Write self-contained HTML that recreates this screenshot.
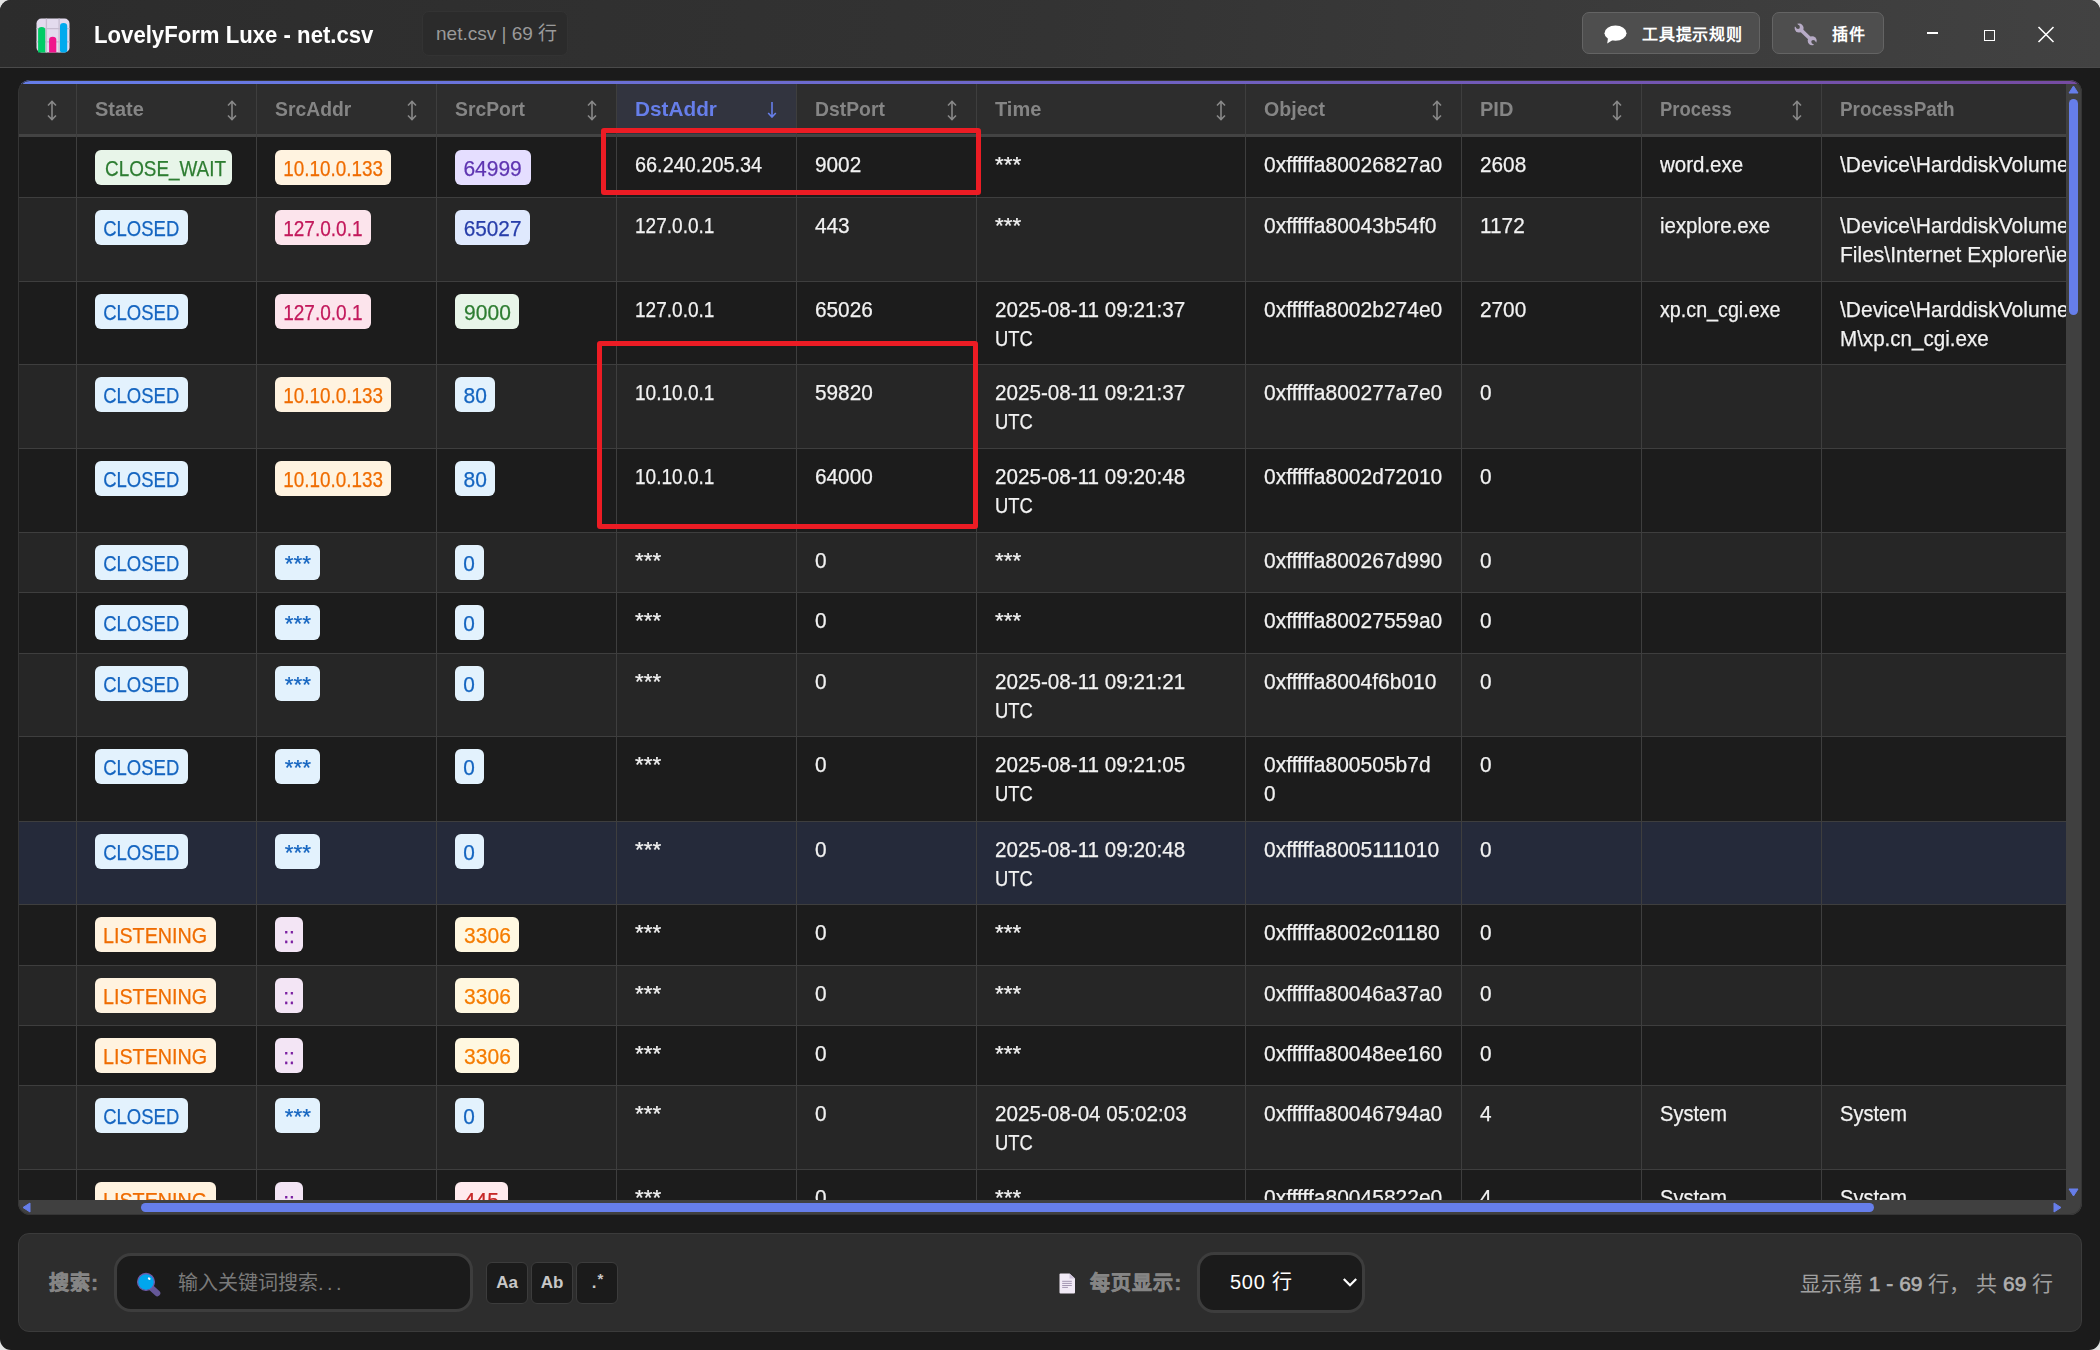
<!DOCTYPE html>
<html lang="zh-CN"><head><meta charset="utf-8">
<style>
*{box-sizing:border-box;margin:0;padding:0}
html,body{width:2100px;height:1350px;overflow:hidden;background:#e4e4e4;font-family:"Liberation Sans",sans-serif}
.win{position:absolute;left:0;top:0;width:2100px;height:1350px;border-radius:11px;background:#1b1b1b;overflow:hidden}
.tb{position:absolute;left:0;top:0;width:2100px;height:68px;background:linear-gradient(95deg,#2c2c2c 0%,#333 50%,#424242 100%);border-bottom:1px solid #4a4a4a}
.title{position:absolute;left:94px;top:21px;font-size:24px;transform:scaleX(0.923);transform-origin:left;font-weight:700;color:#fff;white-space:nowrap}
.fbadge{position:absolute;left:422px;top:11px;width:146px;height:45px;border-radius:7px;background:#2b2b2b;border:1px solid #333;color:#9a9a9a;font-size:19px;line-height:43px;padding-left:13px;white-space:nowrap}
.btn{position:absolute;top:12px;height:42px;border-radius:7px;background:#4e4e4e;border:1px solid #646464;color:#fff;font-size:17px;font-weight:700;white-space:nowrap}
.tbl{position:absolute;left:18px;top:80px;width:2064px;height:1135px;border-radius:12px;overflow:hidden;background:#1c1c1c}
.tblb{position:absolute;left:0;top:0;width:2064px;height:1135px;border-radius:12px;border:1px solid #353535}
.topbar{position:absolute;left:18px;top:80px;width:2064px;height:4px;background:linear-gradient(90deg,#667eea,#764ba2)}
.abs{position:absolute}
.hbg{position:absolute;left:18px;top:84px;width:2048px;height:50px;background:#2d2d2d}
.hbb{position:absolute;left:18px;top:134px;width:2048px;height:3px;background:#434343}
.hsel{position:absolute;top:84px;height:50px;background:#32343f}
.ht{position:absolute;top:94px;font-size:21px;font-weight:700;color:#858585;white-space:nowrap;line-height:29px}
.ht.sel{color:#667eea}
.arr{position:absolute;top:95px;width:16px;text-align:center;font-size:20px;color:#8a8a8a;line-height:29px}
.arr.sel{color:#667eea}
.row{position:absolute;left:18px;width:2048px}
.hl{position:absolute;left:18px;width:2048px;height:1px;background:#3e3e3e}
.vl{position:absolute;top:84px;width:1px;height:1116px;background:#3e3e3e}
.bd{position:absolute;height:35px;border-radius:6px;font-size:22px;-webkit-text-stroke:0.25px currentColor;line-height:34px;padding-top:2px;text-align:center;white-space:nowrap}
.ln{display:block;white-space:nowrap}
.bd .ln{display:inline-block}
.tx{position:absolute;font-size:22px;-webkit-text-stroke:0.25px currentColor;line-height:29px;color:#f2f2f2;white-space:nowrap;overflow:hidden}
.vsb{position:absolute;left:2066px;top:84px;width:16px;height:1132px;background:#404040}
.hsb{position:absolute;left:18px;top:1200px;width:2064px;height:15px;background:#404040}
.red{position:absolute;border:5px solid #ec1c24;border-radius:3px}
.btxt{position:absolute;top:22px;font-size:16px;letter-spacing:0.8px;font-weight:700;color:#fff;white-space:nowrap;line-height:26px}
.flab{position:absolute;top:1268px;font-size:20px;letter-spacing:1.1px;font-weight:700;-webkit-text-stroke:0.6px currentColor;color:#858585;white-space:nowrap;line-height:30px}
.finp{position:absolute;top:1253px;height:59px;border-radius:17px;background:#1b1b1b;border:3px solid #3d3d3d}
.fph{position:absolute;top:1268px;font-size:20px;color:#7a7a7a;white-space:nowrap;line-height:30px}
.fbtn{position:absolute;top:1262px;width:42px;height:42px;border-radius:6px;background:#1b1b1b;border:1px solid #3c3c3c;color:#c8c8c8;font-size:17px;font-weight:700;text-align:center;line-height:39px}
.fsel{position:absolute;top:1267px;font-size:20px;letter-spacing:0.7px;color:#fff;white-space:nowrap;line-height:30px}
.finfo{position:absolute;left:1800px;top:1269px;font-size:21px;color:#a0a0a0;white-space:nowrap;line-height:30px}
.finfo b{font-weight:400;-webkit-text-stroke:0.6px currentColor;color:#b0b0b0}
.foot{position:absolute;left:18px;top:1233px;width:2064px;height:99px;border-radius:11px;background:#2d2d2d;border:1px solid #3b3b3b}
</style></head><body>
<div class="win">
  <div class="tb">
    <svg class="abs" style="left:36px;top:18px" width="34" height="35" viewBox="-0.5 -0.5 34 35">
      <rect x="0" y="0" width="33" height="34" rx="5" fill="#e3dbee"/>
      <line x1="9.9" y1="0" x2="9.9" y2="34" stroke="#c6bcd0" stroke-width="1.3"/>
      <line x1="22.6" y1="0" x2="22.6" y2="34" stroke="#c6bcd0" stroke-width="1.3"/>
      <line x1="0" y1="10.2" x2="33" y2="10.2" stroke="#c6bcd0" stroke-width="1.3"/>
      <line x1="0" y1="23.4" x2="33" y2="23.4" stroke="#c6bcd0" stroke-width="1.3"/>
      <path d="M1.6 11.5 q0-3 3.6-3 q3.6 0 3.6 3 V34 H1.6z" fill="#00cc66"/>
      <path d="M12.6 21.2 q0-3 3.6-3 q3.6 0 3.6 3 V34 H12.6z" fill="#f0148c"/>
      <path d="M23.5 7.6 q0-3 3.6-3 q3.6 0 3.6 3 V32 q0 2-2 2 h-3.2 q-2 0-2-2z" fill="#00aaee"/>
    </svg>
    <div class="title">LovelyForm Luxe - net.csv</div>
    <div class="fbadge">net.csv | 69 行</div>
    <div class="btn" style="left:1582px;width:178px"></div>
    <svg class="abs" style="left:1603px;top:25px" width="25" height="20" viewBox="0 0 25 20">
      <ellipse cx="12.5" cy="8.2" rx="11" ry="7.6" fill="#fff"/>
      <path d="M5 13 L4.2 18.5 L10.5 14.5z" fill="#fff"/>
    </svg>
    <div class="btxt" style="left:1642px">工具提示规则</div>
    <div class="btn" style="left:1772px;width:112px"></div>
    <svg class="abs" style="left:1790px;top:20px" width="30" height="30" viewBox="0 0 30 30">
      <defs><mask id="wm"><rect x="0" y="0" width="30" height="30" fill="#fff"/>
        <circle cx="8" cy="7" r="1.9" fill="#000"/><path d="M8 7 L4.5 3.5" stroke="#000" stroke-width="3.4"/>
        <circle cx="23.2" cy="21.8" r="1.9" fill="#000"/><path d="M23.2 21.8 L26.8 25.3" stroke="#000" stroke-width="3.4"/>
      </mask></defs>
      <g mask="url(#wm)" fill="#b7abc6">
        <circle cx="9.1" cy="8.1" r="4.5"/>
        <circle cx="22.2" cy="20.8" r="4.5"/>
        <path d="M9.1 8.1 L22.2 20.8" stroke="#b7abc6" stroke-width="3.6"/>
      </g>
    </svg>
    <div class="btxt" style="left:1832px">插件</div>
    <div class="abs" style="left:1927px;top:32px;width:11px;height:2px;background:#fff"></div>
    <div class="abs" style="left:1984px;top:30px;width:11px;height:10.5px;border:1.3px solid #fff"></div>
    <svg class="abs" style="left:2037px;top:26px" width="18" height="17" viewBox="0 0 18 17">
      <path d="M1.5 1 L16.5 16 M16.5 1 L1.5 16" stroke="#fff" stroke-width="1.6"/>
    </svg>
  </div>
  <div class="tbl">
    <div class="abs" style="left:-18px;top:-80px;width:2100px;height:1350px">
    <div class="topbar"></div>
    <div class="hbg"></div>
    <svg class="abs" style="left:47px;top:100px" width="10" height="21" viewBox="0 0 10 21"><path d="M5 1.5 V19.5 M1 5.5 L5 1.5 L9 5.5 M1 15.5 L5 19.5 L9 15.5" stroke="#888" stroke-width="1.6" fill="none"/></svg>
<div class="ht" style="left:95px"><span class="ln" style="transform:scaleX(0.9524);transform-origin:left">State</span></div>
<svg class="abs" style="left:227px;top:100px" width="10" height="21" viewBox="0 0 10 21"><path d="M5 1.5 V19.5 M1 5.5 L5 1.5 L9 5.5 M1 15.5 L5 19.5 L9 15.5" stroke="#888" stroke-width="1.6" fill="none"/></svg>
<div class="ht" style="left:275px"><span class="ln" style="transform:scaleX(0.921);transform-origin:left">SrcAddr</span></div>
<svg class="abs" style="left:407px;top:100px" width="10" height="21" viewBox="0 0 10 21"><path d="M5 1.5 V19.5 M1 5.5 L5 1.5 L9 5.5 M1 15.5 L5 19.5 L9 15.5" stroke="#888" stroke-width="1.6" fill="none"/></svg>
<div class="ht" style="left:455px"><span class="ln" style="transform:scaleX(0.921);transform-origin:left">SrcPort</span></div>
<svg class="abs" style="left:587px;top:100px" width="10" height="21" viewBox="0 0 10 21"><path d="M5 1.5 V19.5 M1 5.5 L5 1.5 L9 5.5 M1 15.5 L5 19.5 L9 15.5" stroke="#888" stroke-width="1.6" fill="none"/></svg>
<div class="hsel" style="left:617px;width:179px"></div>
<div class="ht sel" style="left:635px"><span class="ln" style="transform:scaleX(0.9886);transform-origin:left">DstAddr</span></div>
<svg class="abs" style="left:767px;top:101px" width="10" height="17" viewBox="0 0 10 17"><path d="M5 1 V16 M1.2 12 L5 16 L8.8 12" stroke="#667eea" stroke-width="1.6" fill="none"/></svg>
<div class="ht" style="left:815px"><span class="ln" style="transform:scaleX(0.921);transform-origin:left">DstPort</span></div>
<svg class="abs" style="left:947px;top:100px" width="10" height="21" viewBox="0 0 10 21"><path d="M5 1.5 V19.5 M1 5.5 L5 1.5 L9 5.5 M1 15.5 L5 19.5 L9 15.5" stroke="#888" stroke-width="1.6" fill="none"/></svg>
<div class="ht" style="left:995px"><span class="ln" style="transform:scaleX(0.9524);transform-origin:left">Time</span></div>
<svg class="abs" style="left:1216px;top:100px" width="10" height="21" viewBox="0 0 10 21"><path d="M5 1.5 V19.5 M1 5.5 L5 1.5 L9 5.5 M1 15.5 L5 19.5 L9 15.5" stroke="#888" stroke-width="1.6" fill="none"/></svg>
<div class="ht" style="left:1264px"><span class="ln" style="transform:scaleX(0.9333);transform-origin:left">Object</span></div>
<svg class="abs" style="left:1432px;top:100px" width="10" height="21" viewBox="0 0 10 21"><path d="M5 1.5 V19.5 M1 5.5 L5 1.5 L9 5.5 M1 15.5 L5 19.5 L9 15.5" stroke="#888" stroke-width="1.6" fill="none"/></svg>
<div class="ht" style="left:1480px"><span class="ln" style="transform:scaleX(0.9524);transform-origin:left">PID</span></div>
<svg class="abs" style="left:1612px;top:100px" width="10" height="21" viewBox="0 0 10 21"><path d="M5 1.5 V19.5 M1 5.5 L5 1.5 L9 5.5 M1 15.5 L5 19.5 L9 15.5" stroke="#888" stroke-width="1.6" fill="none"/></svg>
<div class="ht" style="left:1660px"><span class="ln" style="transform:scaleX(0.8771);transform-origin:left">Process</span></div>
<svg class="abs" style="left:1792px;top:100px" width="10" height="21" viewBox="0 0 10 21"><path d="M5 1.5 V19.5 M1 5.5 L5 1.5 L9 5.5 M1 15.5 L5 19.5 L9 15.5" stroke="#888" stroke-width="1.6" fill="none"/></svg>
<div class="ht" style="left:1840px"><span class="ln" style="transform:scaleX(0.901);transform-origin:left">ProcessPath</span></div>
    <div class="row" style="top:137px;height:60px;background:#1c1c1c"></div>
<div class="hl" style="top:197px"></div>
<div class="bd" style="left:95px;top:150px;width:137px;background:#e8f5e9;color:#2e7d32"><span class="ln" style="transform:scaleX(0.8581);transform-origin:center">CLOSE_WAIT</span></div>
<div class="bd" style="left:275px;top:150px;width:116px;background:#fff3e0;color:#ef6c00"><span class="ln" style="transform:scaleX(0.8581);transform-origin:center">10.10.0.133</span></div>
<div class="bd" style="left:455px;top:150px;width:76px;background:#e5deff;color:#5e35b1"><span class="ln" style="transform:scaleX(0.9545);transform-origin:center">64999</span></div>
<div class="tx" style="left:635px;top:150px;width:159px"><span class="ln" style="transform:scaleX(0.904);transform-origin:left">66.240.205.34</span></div>
<div class="tx" style="left:815px;top:150px;width:159px"><span class="ln" style="transform:scaleX(0.945);transform-origin:left">9002</span></div>
<div class="tx" style="left:995px;top:150px;width:248px"><span class="ln" style="transform:scaleX(1.0214);transform-origin:left">***</span></div>
<div class="tx" style="left:1264px;top:150px;width:195px"><span class="ln" style="transform:scaleX(0.9545);transform-origin:left">0xfffffa80026827a0</span></div>
<div class="tx" style="left:1480px;top:150px;width:159px"><span class="ln" style="transform:scaleX(0.945);transform-origin:left">2608</span></div>
<div class="tx" style="left:1660px;top:150px;width:159px"><span class="ln" style="transform:scaleX(0.9316);transform-origin:left">word.exe</span></div>
<div class="tx" style="left:1840px;top:150px;width:226px"><span class="ln" style="transform:scaleX(0.9545);transform-origin:left">\Device\HarddiskVolume2</span></div>
<div class="row" style="top:198px;height:83px;background:#262626"></div>
<div class="hl" style="top:281px"></div>
<div class="bd" style="left:95px;top:210px;width:93px;background:#e3f2fd;color:#1565c0"><span class="ln" style="transform:scaleX(0.84);transform-origin:center">CLOSED</span></div>
<div class="bd" style="left:275px;top:210px;width:96px;background:#fce4ec;color:#c2185b"><span class="ln" style="transform:scaleX(0.8658);transform-origin:center">127.0.0.1</span></div>
<div class="bd" style="left:455px;top:210px;width:75px;background:#dfe9fd;color:#283eaa"><span class="ln" style="transform:scaleX(0.945);transform-origin:center">65027</span></div>
<div class="tx" style="left:635px;top:211px;width:159px"><span class="ln" style="transform:scaleX(0.8658);transform-origin:left">127.0.0.1</span></div>
<div class="tx" style="left:815px;top:211px;width:159px"><span class="ln" style="transform:scaleX(0.945);transform-origin:left">443</span></div>
<div class="tx" style="left:995px;top:211px;width:248px"><span class="ln" style="transform:scaleX(1.0214);transform-origin:left">***</span></div>
<div class="tx" style="left:1264px;top:211px;width:195px"><span class="ln" style="transform:scaleX(0.9545);transform-origin:left">0xfffffa80043b54f0</span></div>
<div class="tx" style="left:1480px;top:211px;width:159px"><span class="ln" style="transform:scaleX(0.945);transform-origin:left">1172</span></div>
<div class="tx" style="left:1660px;top:211px;width:159px"><span class="ln" style="transform:scaleX(0.9288);transform-origin:left">iexplore.exe</span></div>
<div class="tx" style="left:1840px;top:211px;width:226px"><span class="ln" style="transform:scaleX(0.9545);transform-origin:left">\Device\HarddiskVolume2</span><span class="ln" style="transform:scaleX(0.9545);transform-origin:left">Files\Internet Explorer\iexplore.exe</span></div>
<div class="row" style="top:282px;height:82px;background:#1c1c1c"></div>
<div class="hl" style="top:364px"></div>
<div class="bd" style="left:95px;top:294px;width:93px;background:#e3f2fd;color:#1565c0"><span class="ln" style="transform:scaleX(0.84);transform-origin:center">CLOSED</span></div>
<div class="bd" style="left:275px;top:294px;width:96px;background:#fce4ec;color:#c2185b"><span class="ln" style="transform:scaleX(0.8658);transform-origin:center">127.0.0.1</span></div>
<div class="bd" style="left:455px;top:294px;width:64px;background:#e8f5e9;color:#2e7d32"><span class="ln" style="transform:scaleX(0.9545);transform-origin:center">9000</span></div>
<div class="tx" style="left:635px;top:295px;width:159px"><span class="ln" style="transform:scaleX(0.8658);transform-origin:left">127.0.0.1</span></div>
<div class="tx" style="left:815px;top:295px;width:159px"><span class="ln" style="transform:scaleX(0.945);transform-origin:left">65026</span></div>
<div class="tx" style="left:995px;top:295px;width:248px"><span class="ln" style="transform:scaleX(0.9383);transform-origin:left">2025-08-11 09:21:37</span><span class="ln" style="transform:scaleX(0.8362);transform-origin:left">UTC</span></div>
<div class="tx" style="left:1264px;top:295px;width:195px"><span class="ln" style="transform:scaleX(0.9545);transform-origin:left">0xfffffa8002b274e0</span></div>
<div class="tx" style="left:1480px;top:295px;width:159px"><span class="ln" style="transform:scaleX(0.945);transform-origin:left">2700</span></div>
<div class="tx" style="left:1660px;top:295px;width:159px"><span class="ln" style="transform:scaleX(0.8954);transform-origin:left">xp.cn_cgi.exe</span></div>
<div class="tx" style="left:1840px;top:295px;width:226px"><span class="ln" style="transform:scaleX(0.9545);transform-origin:left">\Device\HarddiskVolume2</span><span class="ln" style="transform:scaleX(0.9355);transform-origin:left">M\xp.cn_cgi.exe</span></div>
<div class="row" style="top:365px;height:83px;background:#262626"></div>
<div class="hl" style="top:448px"></div>
<div class="bd" style="left:95px;top:377px;width:93px;background:#e3f2fd;color:#1565c0"><span class="ln" style="transform:scaleX(0.84);transform-origin:center">CLOSED</span></div>
<div class="bd" style="left:275px;top:377px;width:116px;background:#fff3e0;color:#ef6c00"><span class="ln" style="transform:scaleX(0.8581);transform-origin:center">10.10.0.133</span></div>
<div class="bd" style="left:455px;top:377px;width:40px;background:#e3f2fd;color:#1565c0"><span class="ln" style="transform:scaleX(0.9545);transform-origin:center">80</span></div>
<div class="tx" style="left:635px;top:378px;width:159px"><span class="ln" style="transform:scaleX(0.8658);transform-origin:left">10.10.0.1</span></div>
<div class="tx" style="left:815px;top:378px;width:159px"><span class="ln" style="transform:scaleX(0.945);transform-origin:left">59820</span></div>
<div class="tx" style="left:995px;top:378px;width:248px"><span class="ln" style="transform:scaleX(0.9383);transform-origin:left">2025-08-11 09:21:37</span><span class="ln" style="transform:scaleX(0.8362);transform-origin:left">UTC</span></div>
<div class="tx" style="left:1264px;top:378px;width:195px"><span class="ln" style="transform:scaleX(0.9545);transform-origin:left">0xfffffa800277a7e0</span></div>
<div class="tx" style="left:1480px;top:378px;width:159px"><span class="ln" style="transform:scaleX(0.945);transform-origin:left">0</span></div>
<div class="row" style="top:449px;height:83px;background:#1c1c1c"></div>
<div class="hl" style="top:532px"></div>
<div class="bd" style="left:95px;top:461px;width:93px;background:#e3f2fd;color:#1565c0"><span class="ln" style="transform:scaleX(0.84);transform-origin:center">CLOSED</span></div>
<div class="bd" style="left:275px;top:461px;width:116px;background:#fff3e0;color:#ef6c00"><span class="ln" style="transform:scaleX(0.8581);transform-origin:center">10.10.0.133</span></div>
<div class="bd" style="left:455px;top:461px;width:40px;background:#e3f2fd;color:#1565c0"><span class="ln" style="transform:scaleX(0.9545);transform-origin:center">80</span></div>
<div class="tx" style="left:635px;top:462px;width:159px"><span class="ln" style="transform:scaleX(0.8658);transform-origin:left">10.10.0.1</span></div>
<div class="tx" style="left:815px;top:462px;width:159px"><span class="ln" style="transform:scaleX(0.945);transform-origin:left">64000</span></div>
<div class="tx" style="left:995px;top:462px;width:248px"><span class="ln" style="transform:scaleX(0.9383);transform-origin:left">2025-08-11 09:20:48</span><span class="ln" style="transform:scaleX(0.8362);transform-origin:left">UTC</span></div>
<div class="tx" style="left:1264px;top:462px;width:195px"><span class="ln" style="transform:scaleX(0.9545);transform-origin:left">0xfffffa8002d72010</span></div>
<div class="tx" style="left:1480px;top:462px;width:159px"><span class="ln" style="transform:scaleX(0.945);transform-origin:left">0</span></div>
<div class="row" style="top:533px;height:59px;background:#262626"></div>
<div class="hl" style="top:592px"></div>
<div class="bd" style="left:95px;top:545px;width:93px;background:#e3f2fd;color:#1565c0"><span class="ln" style="transform:scaleX(0.84);transform-origin:center">CLOSED</span></div>
<div class="bd" style="left:275px;top:545px;width:45px;background:#e3f2fd;color:#1565c0"><span class="ln" style="transform:scaleX(1.0214);transform-origin:center">***</span></div>
<div class="bd" style="left:455px;top:545px;width:29px;background:#e3f2fd;color:#1565c0"><span class="ln" style="transform:scaleX(0.945);transform-origin:center">0</span></div>
<div class="tx" style="left:635px;top:546px;width:159px"><span class="ln" style="transform:scaleX(1.0214);transform-origin:left">***</span></div>
<div class="tx" style="left:815px;top:546px;width:159px"><span class="ln" style="transform:scaleX(0.945);transform-origin:left">0</span></div>
<div class="tx" style="left:995px;top:546px;width:248px"><span class="ln" style="transform:scaleX(1.0214);transform-origin:left">***</span></div>
<div class="tx" style="left:1264px;top:546px;width:195px"><span class="ln" style="transform:scaleX(0.9545);transform-origin:left">0xfffffa800267d990</span></div>
<div class="tx" style="left:1480px;top:546px;width:159px"><span class="ln" style="transform:scaleX(0.945);transform-origin:left">0</span></div>
<div class="row" style="top:593px;height:60px;background:#1c1c1c"></div>
<div class="hl" style="top:653px"></div>
<div class="bd" style="left:95px;top:605px;width:93px;background:#e3f2fd;color:#1565c0"><span class="ln" style="transform:scaleX(0.84);transform-origin:center">CLOSED</span></div>
<div class="bd" style="left:275px;top:605px;width:45px;background:#e3f2fd;color:#1565c0"><span class="ln" style="transform:scaleX(1.0214);transform-origin:center">***</span></div>
<div class="bd" style="left:455px;top:605px;width:29px;background:#e3f2fd;color:#1565c0"><span class="ln" style="transform:scaleX(0.945);transform-origin:center">0</span></div>
<div class="tx" style="left:635px;top:606px;width:159px"><span class="ln" style="transform:scaleX(1.0214);transform-origin:left">***</span></div>
<div class="tx" style="left:815px;top:606px;width:159px"><span class="ln" style="transform:scaleX(0.945);transform-origin:left">0</span></div>
<div class="tx" style="left:995px;top:606px;width:248px"><span class="ln" style="transform:scaleX(1.0214);transform-origin:left">***</span></div>
<div class="tx" style="left:1264px;top:606px;width:195px"><span class="ln" style="transform:scaleX(0.9545);transform-origin:left">0xfffffa80027559a0</span></div>
<div class="tx" style="left:1480px;top:606px;width:159px"><span class="ln" style="transform:scaleX(0.945);transform-origin:left">0</span></div>
<div class="row" style="top:654px;height:82px;background:#262626"></div>
<div class="hl" style="top:736px"></div>
<div class="bd" style="left:95px;top:666px;width:93px;background:#e3f2fd;color:#1565c0"><span class="ln" style="transform:scaleX(0.84);transform-origin:center">CLOSED</span></div>
<div class="bd" style="left:275px;top:666px;width:45px;background:#e3f2fd;color:#1565c0"><span class="ln" style="transform:scaleX(1.0214);transform-origin:center">***</span></div>
<div class="bd" style="left:455px;top:666px;width:29px;background:#e3f2fd;color:#1565c0"><span class="ln" style="transform:scaleX(0.945);transform-origin:center">0</span></div>
<div class="tx" style="left:635px;top:667px;width:159px"><span class="ln" style="transform:scaleX(1.0214);transform-origin:left">***</span></div>
<div class="tx" style="left:815px;top:667px;width:159px"><span class="ln" style="transform:scaleX(0.945);transform-origin:left">0</span></div>
<div class="tx" style="left:995px;top:667px;width:248px"><span class="ln" style="transform:scaleX(0.9383);transform-origin:left">2025-08-11 09:21:21</span><span class="ln" style="transform:scaleX(0.8362);transform-origin:left">UTC</span></div>
<div class="tx" style="left:1264px;top:667px;width:195px"><span class="ln" style="transform:scaleX(0.9545);transform-origin:left">0xfffffa8004f6b010</span></div>
<div class="tx" style="left:1480px;top:667px;width:159px"><span class="ln" style="transform:scaleX(0.945);transform-origin:left">0</span></div>
<div class="row" style="top:737px;height:84px;background:#1c1c1c"></div>
<div class="hl" style="top:821px"></div>
<div class="bd" style="left:95px;top:749px;width:93px;background:#e3f2fd;color:#1565c0"><span class="ln" style="transform:scaleX(0.84);transform-origin:center">CLOSED</span></div>
<div class="bd" style="left:275px;top:749px;width:45px;background:#e3f2fd;color:#1565c0"><span class="ln" style="transform:scaleX(1.0214);transform-origin:center">***</span></div>
<div class="bd" style="left:455px;top:749px;width:29px;background:#e3f2fd;color:#1565c0"><span class="ln" style="transform:scaleX(0.945);transform-origin:center">0</span></div>
<div class="tx" style="left:635px;top:750px;width:159px"><span class="ln" style="transform:scaleX(1.0214);transform-origin:left">***</span></div>
<div class="tx" style="left:815px;top:750px;width:159px"><span class="ln" style="transform:scaleX(0.945);transform-origin:left">0</span></div>
<div class="tx" style="left:995px;top:750px;width:248px"><span class="ln" style="transform:scaleX(0.9383);transform-origin:left">2025-08-11 09:21:05</span><span class="ln" style="transform:scaleX(0.8362);transform-origin:left">UTC</span></div>
<div class="tx" style="left:1264px;top:750px;width:195px"><span class="ln" style="transform:scaleX(0.9545);transform-origin:left">0xfffffa800505b7d</span><span class="ln" style="transform:scaleX(0.945);transform-origin:left">0</span></div>
<div class="tx" style="left:1480px;top:750px;width:159px"><span class="ln" style="transform:scaleX(0.945);transform-origin:left">0</span></div>
<div class="row" style="top:822px;height:82px;background:#252a3a"></div>
<div class="hl" style="top:904px"></div>
<div class="bd" style="left:95px;top:834px;width:93px;background:#e3f2fd;color:#1565c0"><span class="ln" style="transform:scaleX(0.84);transform-origin:center">CLOSED</span></div>
<div class="bd" style="left:275px;top:834px;width:45px;background:#e3f2fd;color:#1565c0"><span class="ln" style="transform:scaleX(1.0214);transform-origin:center">***</span></div>
<div class="bd" style="left:455px;top:834px;width:29px;background:#e3f2fd;color:#1565c0"><span class="ln" style="transform:scaleX(0.945);transform-origin:center">0</span></div>
<div class="tx" style="left:635px;top:835px;width:159px"><span class="ln" style="transform:scaleX(1.0214);transform-origin:left">***</span></div>
<div class="tx" style="left:815px;top:835px;width:159px"><span class="ln" style="transform:scaleX(0.945);transform-origin:left">0</span></div>
<div class="tx" style="left:995px;top:835px;width:248px"><span class="ln" style="transform:scaleX(0.9383);transform-origin:left">2025-08-11 09:20:48</span><span class="ln" style="transform:scaleX(0.8362);transform-origin:left">UTC</span></div>
<div class="tx" style="left:1264px;top:835px;width:195px"><span class="ln" style="transform:scaleX(0.9545);transform-origin:left">0xfffffa8005111010</span></div>
<div class="tx" style="left:1480px;top:835px;width:159px"><span class="ln" style="transform:scaleX(0.945);transform-origin:left">0</span></div>
<div class="row" style="top:905px;height:60px;background:#1c1c1c"></div>
<div class="hl" style="top:965px"></div>
<div class="bd" style="left:95px;top:917px;width:121px;background:#fff3e0;color:#ef6c00"><span class="ln" style="transform:scaleX(0.8973);transform-origin:center">LISTENING</span></div>
<div class="bd" style="left:275px;top:917px;width:28px;background:#f3e5f5;color:#7b1fa2"><span class="ln" style="transform:scaleX(0.9545);transform-origin:center">::</span></div>
<div class="bd" style="left:455px;top:917px;width:64px;background:#fff8e1;color:#f57c00"><span class="ln" style="transform:scaleX(0.9545);transform-origin:center">3306</span></div>
<div class="tx" style="left:635px;top:918px;width:159px"><span class="ln" style="transform:scaleX(1.0214);transform-origin:left">***</span></div>
<div class="tx" style="left:815px;top:918px;width:159px"><span class="ln" style="transform:scaleX(0.945);transform-origin:left">0</span></div>
<div class="tx" style="left:995px;top:918px;width:248px"><span class="ln" style="transform:scaleX(1.0214);transform-origin:left">***</span></div>
<div class="tx" style="left:1264px;top:918px;width:195px"><span class="ln" style="transform:scaleX(0.9545);transform-origin:left">0xfffffa8002c01180</span></div>
<div class="tx" style="left:1480px;top:918px;width:159px"><span class="ln" style="transform:scaleX(0.945);transform-origin:left">0</span></div>
<div class="row" style="top:966px;height:59px;background:#262626"></div>
<div class="hl" style="top:1025px"></div>
<div class="bd" style="left:95px;top:978px;width:121px;background:#fff3e0;color:#ef6c00"><span class="ln" style="transform:scaleX(0.8973);transform-origin:center">LISTENING</span></div>
<div class="bd" style="left:275px;top:978px;width:28px;background:#f3e5f5;color:#7b1fa2"><span class="ln" style="transform:scaleX(0.9545);transform-origin:center">::</span></div>
<div class="bd" style="left:455px;top:978px;width:64px;background:#fff8e1;color:#f57c00"><span class="ln" style="transform:scaleX(0.9545);transform-origin:center">3306</span></div>
<div class="tx" style="left:635px;top:979px;width:159px"><span class="ln" style="transform:scaleX(1.0214);transform-origin:left">***</span></div>
<div class="tx" style="left:815px;top:979px;width:159px"><span class="ln" style="transform:scaleX(0.945);transform-origin:left">0</span></div>
<div class="tx" style="left:995px;top:979px;width:248px"><span class="ln" style="transform:scaleX(1.0214);transform-origin:left">***</span></div>
<div class="tx" style="left:1264px;top:979px;width:195px"><span class="ln" style="transform:scaleX(0.9545);transform-origin:left">0xfffffa80046a37a0</span></div>
<div class="tx" style="left:1480px;top:979px;width:159px"><span class="ln" style="transform:scaleX(0.945);transform-origin:left">0</span></div>
<div class="row" style="top:1026px;height:59px;background:#1c1c1c"></div>
<div class="hl" style="top:1085px"></div>
<div class="bd" style="left:95px;top:1038px;width:121px;background:#fff3e0;color:#ef6c00"><span class="ln" style="transform:scaleX(0.8973);transform-origin:center">LISTENING</span></div>
<div class="bd" style="left:275px;top:1038px;width:28px;background:#f3e5f5;color:#7b1fa2"><span class="ln" style="transform:scaleX(0.9545);transform-origin:center">::</span></div>
<div class="bd" style="left:455px;top:1038px;width:64px;background:#fff8e1;color:#f57c00"><span class="ln" style="transform:scaleX(0.9545);transform-origin:center">3306</span></div>
<div class="tx" style="left:635px;top:1039px;width:159px"><span class="ln" style="transform:scaleX(1.0214);transform-origin:left">***</span></div>
<div class="tx" style="left:815px;top:1039px;width:159px"><span class="ln" style="transform:scaleX(0.945);transform-origin:left">0</span></div>
<div class="tx" style="left:995px;top:1039px;width:248px"><span class="ln" style="transform:scaleX(1.0214);transform-origin:left">***</span></div>
<div class="tx" style="left:1264px;top:1039px;width:195px"><span class="ln" style="transform:scaleX(0.9545);transform-origin:left">0xfffffa80048ee160</span></div>
<div class="tx" style="left:1480px;top:1039px;width:159px"><span class="ln" style="transform:scaleX(0.945);transform-origin:left">0</span></div>
<div class="row" style="top:1086px;height:83px;background:#262626"></div>
<div class="hl" style="top:1169px"></div>
<div class="bd" style="left:95px;top:1098px;width:93px;background:#e3f2fd;color:#1565c0"><span class="ln" style="transform:scaleX(0.84);transform-origin:center">CLOSED</span></div>
<div class="bd" style="left:275px;top:1098px;width:45px;background:#e3f2fd;color:#1565c0"><span class="ln" style="transform:scaleX(1.0214);transform-origin:center">***</span></div>
<div class="bd" style="left:455px;top:1098px;width:29px;background:#e3f2fd;color:#1565c0"><span class="ln" style="transform:scaleX(0.945);transform-origin:center">0</span></div>
<div class="tx" style="left:635px;top:1099px;width:159px"><span class="ln" style="transform:scaleX(1.0214);transform-origin:left">***</span></div>
<div class="tx" style="left:815px;top:1099px;width:159px"><span class="ln" style="transform:scaleX(0.945);transform-origin:left">0</span></div>
<div class="tx" style="left:995px;top:1099px;width:248px"><span class="ln" style="transform:scaleX(0.9383);transform-origin:left">2025-08-04 05:02:03</span><span class="ln" style="transform:scaleX(0.8362);transform-origin:left">UTC</span></div>
<div class="tx" style="left:1264px;top:1099px;width:195px"><span class="ln" style="transform:scaleX(0.9545);transform-origin:left">0xfffffa80046794a0</span></div>
<div class="tx" style="left:1480px;top:1099px;width:159px"><span class="ln" style="transform:scaleX(0.945);transform-origin:left">4</span></div>
<div class="tx" style="left:1660px;top:1099px;width:159px"><span class="ln" style="transform:scaleX(0.9125);transform-origin:left">System</span></div>
<div class="tx" style="left:1840px;top:1099px;width:226px"><span class="ln" style="transform:scaleX(0.9125);transform-origin:left">System</span></div>
<div class="row" style="top:1170px;height:60px;background:#1c1c1c"></div>
<div class="bd" style="left:95px;top:1182px;width:121px;background:#fff3e0;color:#ef6c00"><span class="ln" style="transform:scaleX(0.8973);transform-origin:center">LISTENING</span></div>
<div class="bd" style="left:275px;top:1182px;width:28px;background:#f3e5f5;color:#7b1fa2"><span class="ln" style="transform:scaleX(0.9545);transform-origin:center">::</span></div>
<div class="bd" style="left:455px;top:1182px;width:53px;background:#ffebee;color:#c62828"><span class="ln" style="transform:scaleX(0.9545);transform-origin:center">445</span></div>
<div class="tx" style="left:635px;top:1183px;width:159px"><span class="ln" style="transform:scaleX(1.0214);transform-origin:left">***</span></div>
<div class="tx" style="left:815px;top:1183px;width:159px"><span class="ln" style="transform:scaleX(0.945);transform-origin:left">0</span></div>
<div class="tx" style="left:995px;top:1183px;width:248px"><span class="ln" style="transform:scaleX(1.0214);transform-origin:left">***</span></div>
<div class="tx" style="left:1264px;top:1183px;width:195px"><span class="ln" style="transform:scaleX(0.9545);transform-origin:left">0xfffffa80045822e0</span></div>
<div class="tx" style="left:1480px;top:1183px;width:159px"><span class="ln" style="transform:scaleX(0.945);transform-origin:left">4</span></div>
<div class="tx" style="left:1660px;top:1183px;width:159px"><span class="ln" style="transform:scaleX(0.9125);transform-origin:left">System</span></div>
<div class="tx" style="left:1840px;top:1183px;width:226px"><span class="ln" style="transform:scaleX(0.9125);transform-origin:left">System</span></div>
    <div class="hbb"></div>
    <div class="vl" style="left:76px"></div>
<div class="vl" style="left:256px"></div>
<div class="vl" style="left:436px"></div>
<div class="vl" style="left:616px"></div>
<div class="vl" style="left:796px"></div>
<div class="vl" style="left:976px"></div>
<div class="vl" style="left:1245px"></div>
<div class="vl" style="left:1461px"></div>
<div class="vl" style="left:1641px"></div>
<div class="vl" style="left:1821px"></div>
    <div class="vsb"></div>
    <div class="hsb"></div>
    <div class="abs" style="left:2069px;top:99px;width:9px;height:216px;border-radius:5px;background:#667eea"></div>
    <div class="abs" style="left:141px;top:1203px;width:1733px;height:9px;border-radius:5px;background:#667eea"></div>
    <svg class="abs" style="left:2068px;top:85px" width="11" height="9" viewBox="0 0 11 9"><path d="M5.5 1 L10 8 H1z" fill="#667eea" stroke="#667eea" stroke-width="1" stroke-linejoin="round"/></svg>
    <svg class="abs" style="left:2068px;top:1188px" width="11" height="9" viewBox="0 0 11 9"><path d="M1 1 H10 L5.5 8z" fill="#667eea" stroke="#667eea" stroke-width="1" stroke-linejoin="round"/></svg>
    <svg class="abs" style="left:22px;top:1202px" width="9" height="11" viewBox="0 0 9 11"><path d="M8 1 V10 L1 5.5z" fill="#667eea" stroke="#667eea" stroke-width="1" stroke-linejoin="round"/></svg>
    <svg class="abs" style="left:2053px;top:1202px" width="9" height="11" viewBox="0 0 9 11"><path d="M1 1 V10 L8 5.5z" fill="#667eea" stroke="#667eea" stroke-width="1" stroke-linejoin="round"/></svg>
    </div>
    <div class="tblb"></div>
  </div>
  <div class="foot"></div>
  <div class="flab" style="left:49px">搜索:</div>
  <div class="finp" style="left:114px;width:359px"></div>
  <svg class="abs" style="left:136px;top:1272px" width="25" height="25" viewBox="0 0 25 25">
    <path d="M15 15.5 L21.3 21.3" stroke="#655899" stroke-width="6" stroke-linecap="round"/>
    <circle cx="10" cy="9.9" r="8.4" fill="#00a6ee" stroke="#6f5aa8" stroke-width="1.3"/>
    <ellipse cx="13.2" cy="6.6" rx="1.5" ry="1.1" transform="rotate(40 13.2 6.6)" fill="#fff"/>
  </svg>
  <div class="fph" style="left:178px">输入关键词搜索<span style="letter-spacing:3.5px">...</span></div>
  <div class="fbtn" style="left:486px">Aa</div>
  <div class="fbtn" style="left:531px">Ab</div>
  <div class="fbtn" style="left:576px">.<span style="font-size:15px;position:relative;top:-4px;left:1px">*</span></div>
  <svg class="abs" style="left:1059px;top:1273px" width="17" height="21" viewBox="0 0 17 21">
    <path d="M1.5 0.5 H10.5 L16 5.5 V19.5 Q16 20.5 15 20.5 H1.5 Q0.5 20.5 0.5 19.5 V1.5 Q0.5 0.5 1.5 0.5z" fill="#f1eaf6"/>
    <path d="M10.5 0.5 V5.5 H16z" fill="#cec3da"/>
    <path d="M3.2 8.3 H12.8 M3.2 10.4 H12.8 M3.2 12.5 H12.8 M3.2 14.4 H8.9" stroke="#a395b2" stroke-width="1"/>
  </svg>
  <div class="flab" style="left:1090px">每页显示:</div>
  <div class="finp" style="left:1197px;top:1252px;width:168px;height:61px"></div>
  <div class="fsel" style="left:1230px">500 行</div>
  <svg class="abs" style="left:1342px;top:1277px" width="16" height="11" viewBox="0 0 16 11">
    <path d="M1.8 2 L8 8.2 L14.2 2" stroke="#fff" stroke-width="2.2" fill="none"/>
  </svg>
  <div class="finfo">显示第 <b>1 - 69</b> 行，&nbsp;共 <b>69</b> 行</div>
  
  <div class="red" style="left:601px;top:128px;width:380px;height:67px"></div>
  <div class="red" style="left:597px;top:341px;width:381px;height:188px"></div>
</div>
</body></html>
